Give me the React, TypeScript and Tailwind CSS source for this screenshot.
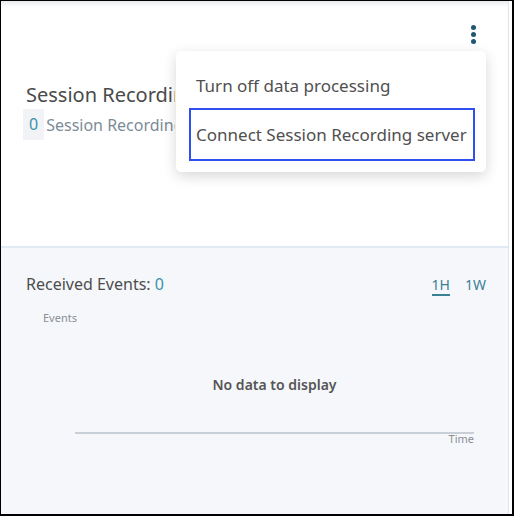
import React from "react";

export default function App() {
  const font = { fontFamily: '"Noto Sans", "Open Sans", sans-serif' };
  return (
    <div
      className="w-[514px] h-[516px] bg-white border-l border-t border-r-2 border-b-2 border-black overflow-hidden relative"
      style={font}
    >
      <div className="mr-[3px] h-full border-r border-[#dbe6f1] flex flex-col">
        {/* top section */}
        <div className="relative h-[247px] bg-white border-b-2 border-[#e1eaf4]">
          <div className="absolute left-0 right-0 top-0 h-[6px] bg-gradient-to-b from-[#e9ebee] to-white" />
          <div className="absolute left-[470px] top-[24px] flex flex-col gap-[2px]">
            <span className="w-[5px] h-[5px] rounded-full bg-[#1e5773]" />
            <span className="w-[5px] h-[5px] rounded-full bg-[#1e5773]" />
            <span className="w-[5px] h-[5px] rounded-full bg-[#1e5773]" />
          </div>
          <div className="pt-[80px] pl-[25px] w-[174px] overflow-hidden whitespace-nowrap">
            <div className="text-[20px] leading-[28px] text-[#4a4a4a]">Session Recording</div>
            <div className="flex items-center">
              <span className="bg-[#f1f3f6] -ml-[3px] px-[6px] py-[5px] text-[16px] leading-[21px] text-[#3a94a8]">0</span>
              <span className="ml-[2px] text-[16px] text-[#7d8b98]">Session Recording servers</span>
            </div>
          </div>
          {/* menu */}
          <div className="absolute left-[175px] top-[50px] w-[310px] h-[121px] bg-white rounded-[5px] shadow-[0_4px_14px_rgba(0,0,0,0.16)] pt-[24px]">
            <div className="pl-[20px] text-[17px] leading-[22px] text-[#505050]">Turn off data processing</div>
            <div className="mt-[11px] ml-[13px] w-[286px] h-[53px] border-2 border-[#2f4ff0] flex items-center pl-[5px] text-[17px] text-[#505050]">
              Connect Session Recording server
            </div>
          </div>
        </div>
        {/* bottom section */}
        <div className="flex-1 bg-[#f5f7fb] px-[25px] pt-[25px] relative">
          <div className="flex items-start justify-between">
            <div className="text-[16px] leading-[22px] text-[#4d4d4d]">
              Received Events: <span className="text-[#3a94a8]">0</span>
            </div>
            <div className="flex gap-[15px] pt-[3px] -mr-[3px] text-[14px] leading-[18px] text-[#3a8196]">
              <span className="border-b-2 border-[#3a8196]">1H</span>
              <span>1W</span>
            </div>
          </div>
          <div className="ml-[17px] mt-[14px] text-[11px] text-[#8a8f96]">Events</div>
          <div className="ml-[49px] mr-[9px] text-center mt-[47px] text-[14px] font-semibold text-[#555]">No data to display</div>
          <div className="ml-[49px] mr-[9px] mt-[37px] h-[2px] bg-[#c9cfd6]" />
          <div className="flex justify-end mr-[9px] -mt-[1px] text-[11px] leading-[12px] text-[#8a8f96]">Time</div>
        </div>
      </div>
    </div>
  );
}
